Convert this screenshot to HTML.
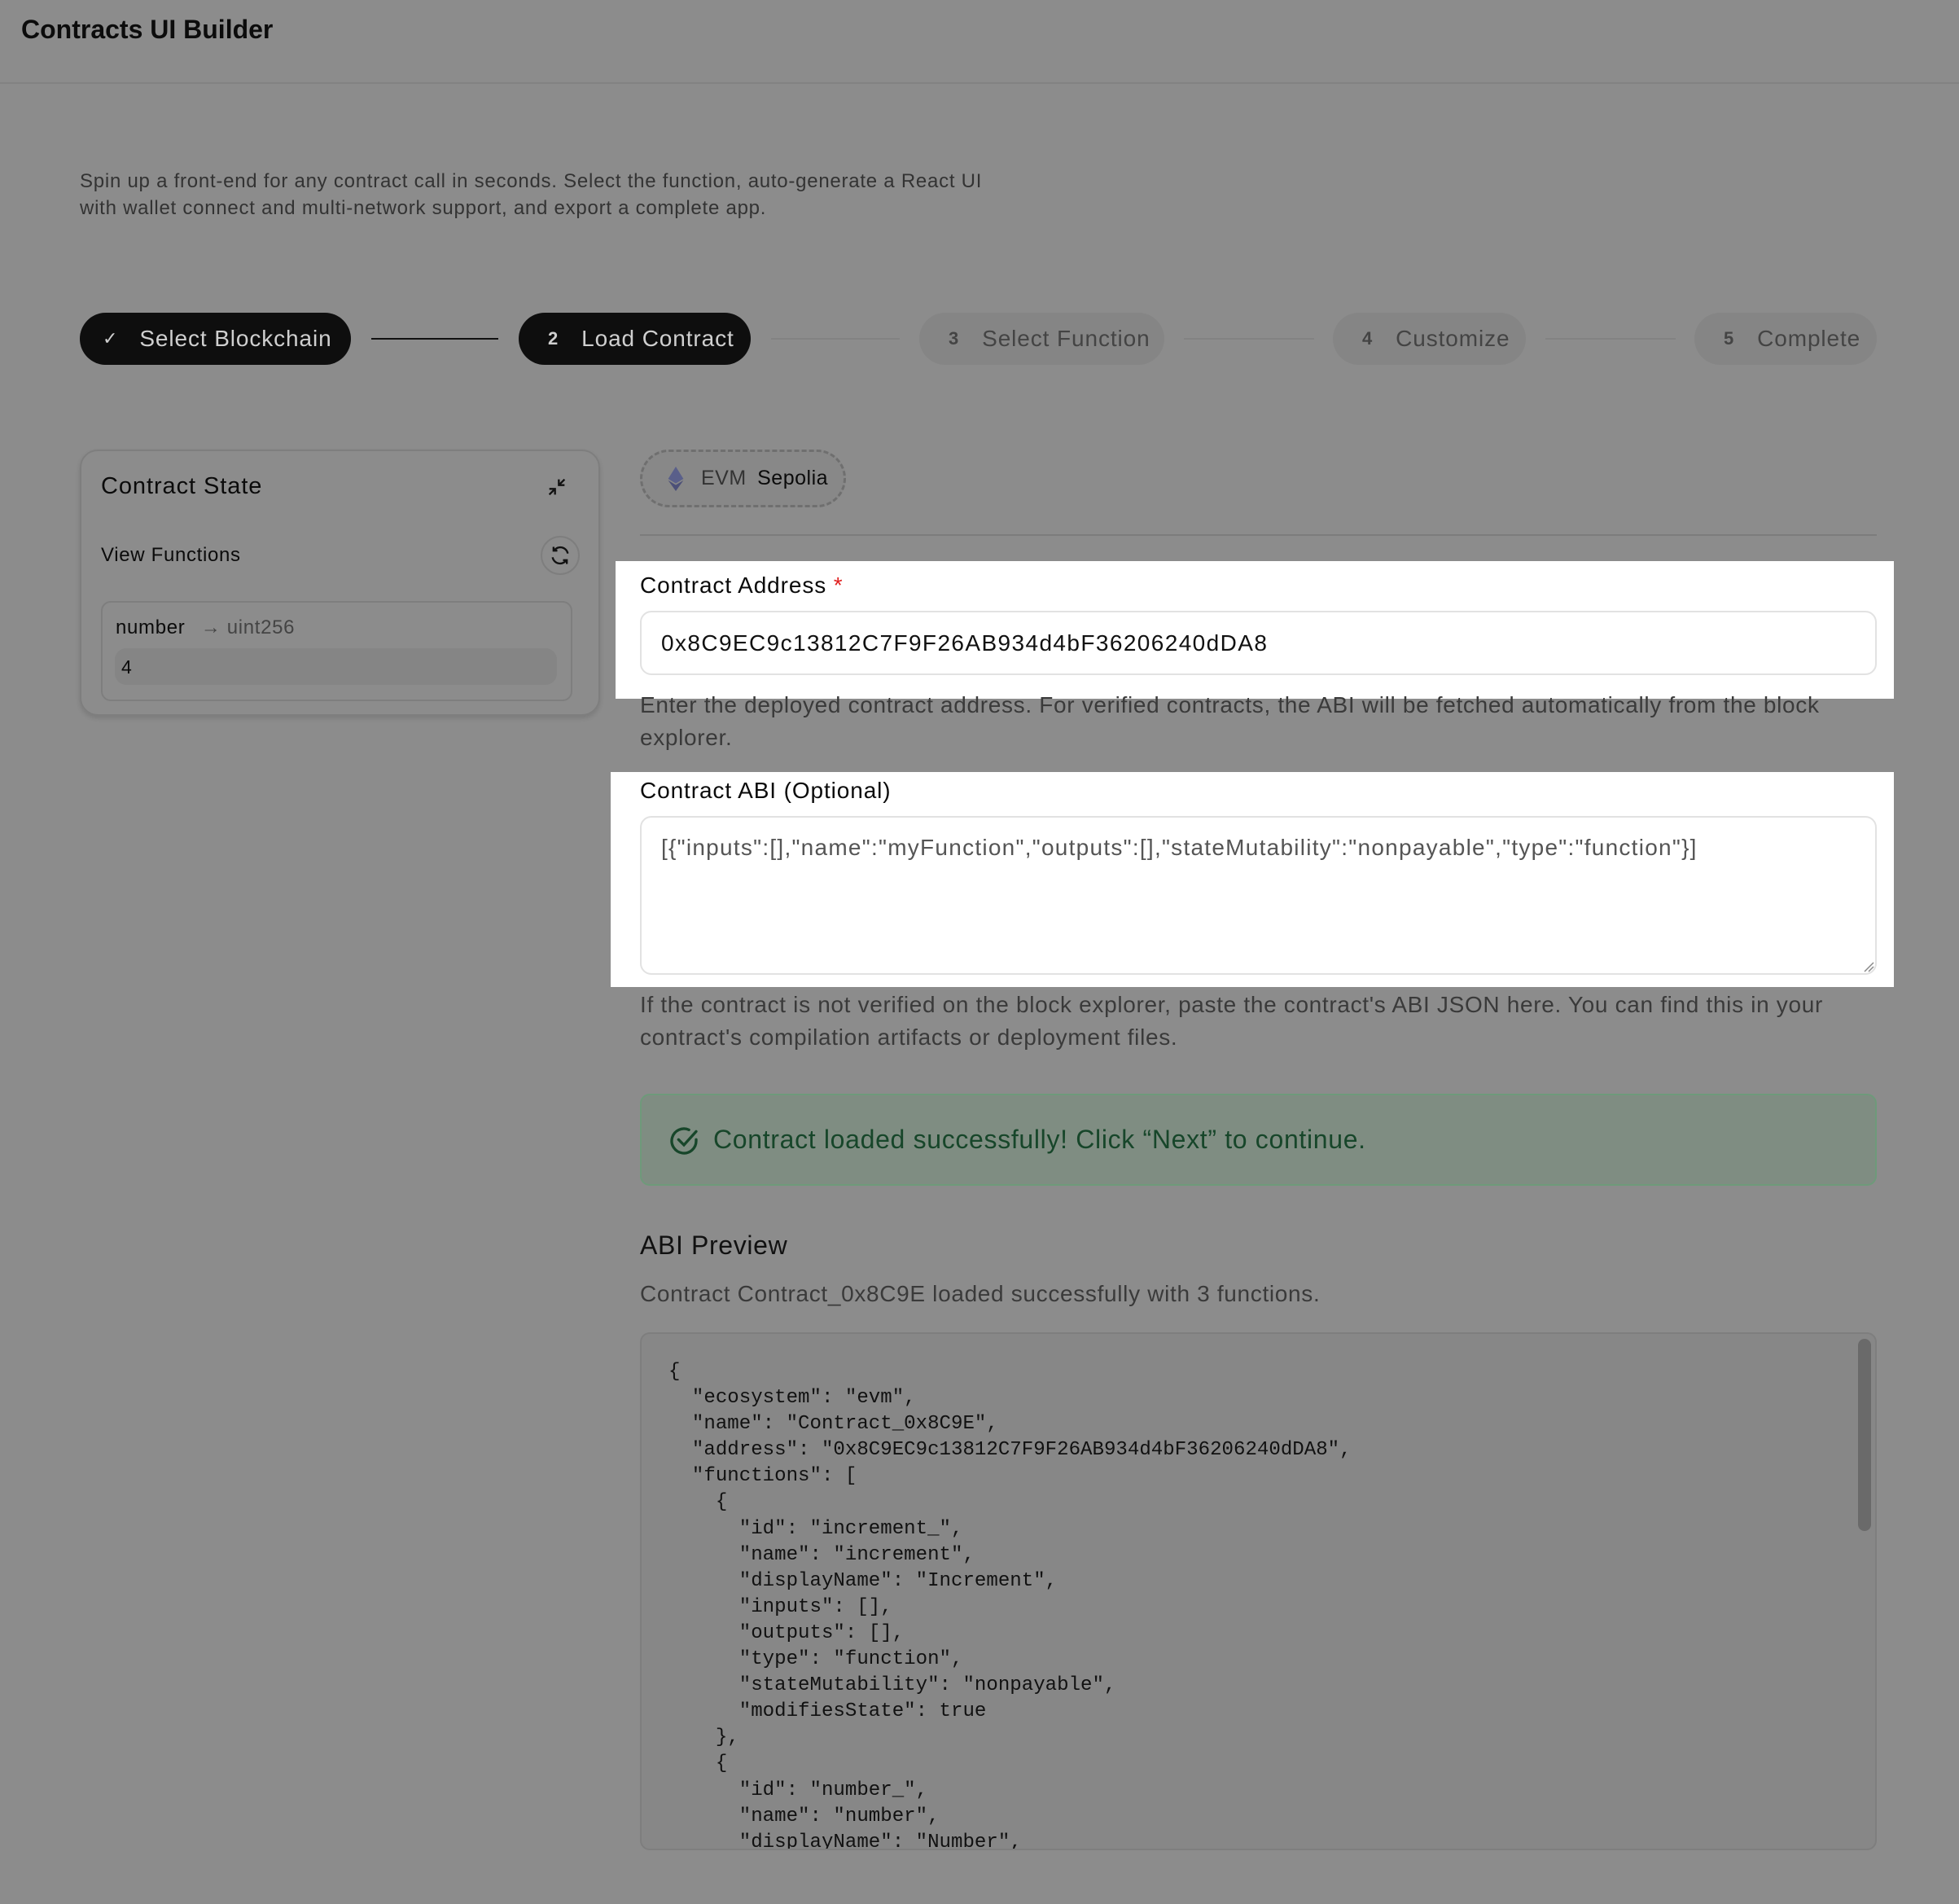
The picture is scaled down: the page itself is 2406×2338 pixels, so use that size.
<!DOCTYPE html>
<html><head><meta charset="utf-8"><style>
*{box-sizing:border-box;margin:0;padding:0}
body{width:2406px;height:2338px;background:#8c8c8c;font-family:"Liberation Sans",sans-serif;color:#0b0b0b;position:relative;overflow:hidden;letter-spacing:0.042em}
.a{position:absolute}
.hdr{left:0;top:0;width:2406px;height:103px;border-bottom:2px solid #828282}
.title{left:26px;top:18px;font-size:32px;font-weight:bold;color:#0c0c0c;letter-spacing:0}
.desc{left:98px;top:206px;font-size:24px;line-height:33px;color:#333;width:1300px;letter-spacing:0.75px}
.pill{height:64px;top:384px;border-radius:32px;display:flex;align-items:center;font-size:28px;padding-left:36px;letter-spacing:0.032em}
.pill.on{background:#0e0e0e;color:#cfcfcf}
.pill.off{background:#858585;color:#444}
.pill b{font-size:22px;margin-right:28px}
.ln{top:415px;height:2px}
.card{left:98px;top:552px;width:639px;height:327px;border:2px solid #7e7e7e;border-radius:22px;box-shadow:0 3px 6px rgba(0,0,0,.12)}
.help{font-size:28px;line-height:40px;color:#3a3a3a;left:786px;width:1560px}
.white{background:#fff}
.lbl{font-size:28px;color:#0b0b0b;letter-spacing:0.032em}
.inp{border:2px solid #e2e2e2;border-radius:14px;background:#fff}
pre{font-family:"Liberation Mono",monospace;font-size:24.1px;line-height:32.1px;color:#111;letter-spacing:0}
</style></head><body>
<div class="a hdr"></div>
<div class="a title">Contracts UI Builder</div>
<div class="a desc">Spin up a front-end for any contract call in seconds. Select the function, auto-generate a React UI<br>with wallet connect and multi-network support, and export a complete app.</div>

<div class="a pill on" style="left:98px;width:333px;padding-left:28px"><span style="font-size:22px;margin-right:26px">✓</span>Select Blockchain</div>
<div class="a ln" style="left:456px;width:156px;background:#111"></div>
<div class="a pill on" style="left:637px;width:285px"><b>2</b>Load Contract</div>
<div class="a ln" style="left:947px;width:158px;background:#828282"></div>
<div class="a pill off" style="left:1129px;width:301px"><b>3</b>Select Function</div>
<div class="a ln" style="left:1454px;width:160px;background:#828282"></div>
<div class="a pill off" style="left:1637px;width:237px"><b>4</b>Customize</div>
<div class="a ln" style="left:1898px;width:160px;background:#828282"></div>
<div class="a pill off" style="left:2081px;width:224px"><b>5</b>Complete</div>

<div class="a card"></div>
<div class="a" style="left:124px;top:581px;font-size:29px;letter-spacing:0.032em">Contract State</div>
<svg class="a" style="left:670px;top:584px" width="28" height="28" viewBox="0 0 24 24" fill="none" stroke="#111" stroke-width="2"><path d="M4 20l6-6M4 14h6v6M20 4l-6 6M20 10h-6V4"/></svg>
<div class="a" style="left:124px;top:668px;font-size:24px">View Functions</div>
<div class="a" style="left:664px;top:658px;width:48px;height:48px;border-radius:50%;border:2px solid #7e7e7e"></div>
<svg class="a" style="left:674px;top:668px" width="28" height="28" viewBox="0 0 24 24" fill="none" stroke="#111" stroke-width="2"><path d="M20 10a8 8 0 0 0-14.5-3M4 14a8 8 0 0 0 14.5 3M5 3v4h4M19 21v-4h-4"/></svg>
<div class="a" style="left:124px;top:738px;width:579px;height:123px;border:2px solid #7e7e7e;border-radius:12px"></div>
<div class="a" style="left:142px;top:757px;font-size:24px">number <span style="color:#444;margin-left:12px">→ uint256</span></div>
<div class="a" style="left:141px;top:796px;width:543px;height:45px;background:#858585;border-radius:14px;font-size:23px;padding:10px 8px">4</div>

<div class="a" style="left:786px;top:552px;width:253px;height:71px;border:3px dashed #6f6f6f;border-radius:36px;background:#888"></div>
<svg class="a" style="left:820px;top:573px" width="20" height="30" viewBox="0 0 10 16"><path d="M5 0L0 8l5 3 5-3z" fill="#5a5f8a"/><path d="M5 12L0 9l5 7 5-7z" fill="#4c5078"/></svg>
<div class="a" style="left:861px;top:573px;font-size:25px;color:#333;letter-spacing:0.02em">EVM <span style="color:#0b0b0b;margin-left:6px">Sepolia</span></div>
<div class="a" style="left:786px;top:656px;width:1519px;height:2px;background:#7c7c7c"></div>

<div class="a white" style="left:756px;top:689px;width:1570px;height:169px"></div>
<div class="a lbl" style="left:786px;top:703px">Contract Address <span style="color:#e0201f">*</span></div>
<div class="a inp" style="left:786px;top:750px;width:1519px;height:79px"></div>
<div class="a" style="left:812px;top:774px;font-size:28px;color:#111;letter-spacing:0.05em">0x8C9EC9c13812C7F9F26AB934d4bF36206240dDA8</div>
<div class="a help" style="top:846px">Enter the deployed contract address. For verified contracts, the ABI will be fetched automatically from the block<br>explorer.</div>

<div class="a white" style="left:750px;top:948px;width:1576px;height:264px"></div>
<div class="a lbl" style="left:786px;top:955px">Contract ABI (Optional)</div>
<div class="a inp" style="left:786px;top:1002px;width:1519px;height:195px"></div>
<svg class="a" style="left:2288px;top:1180px" width="14" height="14"><path d="M2 13L13 2M7 13L13 7" stroke="#888" stroke-width="1.5"/></svg>
<div class="a" style="left:812px;top:1025px;font-size:28px;color:#555;letter-spacing:0.045em">[{"inputs":[],"name":"myFunction","outputs":[],"stateMutability":"nonpayable","type":"function"}]</div>
<div class="a help" style="top:1214px">If the contract is not verified on the block explorer, paste the contract's ABI JSON here. You can find this in your<br>contract's compilation artifacts or deployment files.</div>

<div class="a" style="left:786px;top:1343px;width:1519px;height:113px;background:#7f8d82;border:2px solid #6e9a7a;border-radius:12px"></div>
<svg class="a" style="left:820px;top:1381px" width="40" height="40" viewBox="0 0 24 24" fill="none" stroke="#17462a" stroke-width="2" stroke-linecap="round"><path d="M21 11v1a9 9 0 1 1-5.3-8.2"/><path d="M8 11l4 4 9-10"/></svg>
<div class="a" style="left:876px;top:1381px;font-size:32px;color:#17462a">Contract loaded successfully! Click “Next” to continue.</div>

<div class="a" style="left:786px;top:1511px;font-size:32px;color:#111;letter-spacing:0.02em">ABI Preview</div>
<div class="a" style="left:786px;top:1573px;font-size:28px;color:#3a3a3a">Contract Contract_0x8C9E loaded successfully with 3 functions.</div>

<div class="a" style="left:786px;top:1636px;width:1519px;height:636px;background:#878787;border:2px solid #7e7e7e;border-radius:12px;overflow:hidden">
<div class="a" style="left:1494px;top:6px;width:16px;height:236px;background:#6a6a6a;border-radius:8px"></div>
<pre class="a" style="left:33px;top:31px">{
  "ecosystem": "evm",
  "name": "Contract_0x8C9E",
  "address": "0x8C9EC9c13812C7F9F26AB934d4bF36206240dDA8",
  "functions": [
    {
      "id": "increment_",
      "name": "increment",
      "displayName": "Increment",
      "inputs": [],
      "outputs": [],
      "type": "function",
      "stateMutability": "nonpayable",
      "modifiesState": true
    },
    {
      "id": "number_",
      "name": "number",
      "displayName": "Number",
      "inputs": [],</pre>
</div>
</body></html>
